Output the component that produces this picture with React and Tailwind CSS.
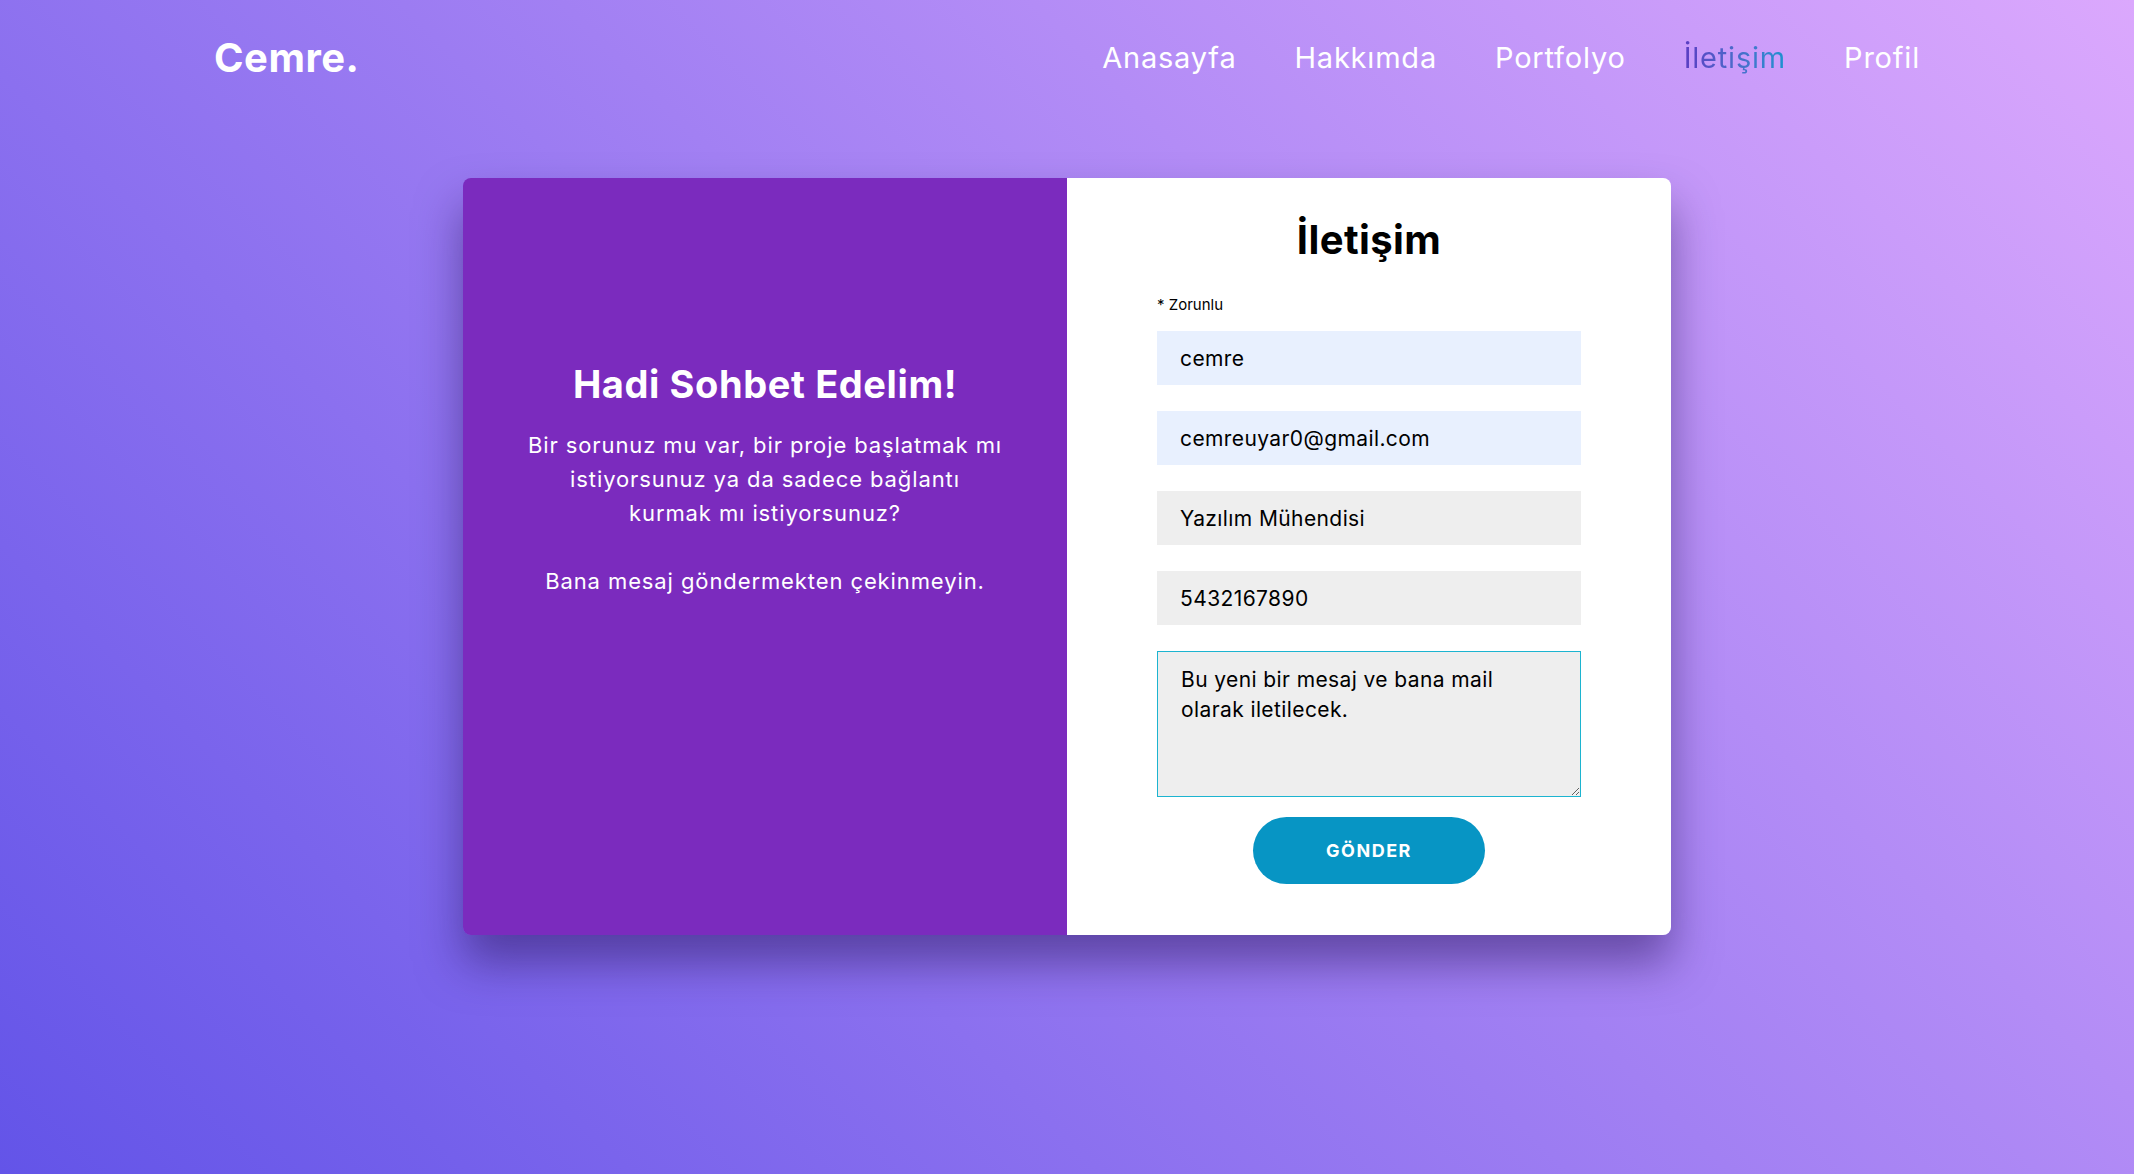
import { useEffect, useRef } from "react";

const NAV = ["Anasayfa", "Hakkımda", "Portfolyo", "İletişim", "Profil"];

const Field = ({ value, autofill }) => (
  <input
    type="text"
    defaultValue={value}
    className={`w-full h-[54px] px-[23px] text-[21px] tracking-[0.4px] text-black outline-none ${
      autofill ? "bg-[#e8f0fe]" : "bg-[#eeeeee]"
    }`}
  />
);

const App = () => {
  const msgRef = useRef(null);

  useEffect(() => {
    const el = msgRef.current;
    if (el) {
      el.focus();
      el.setSelectionRange(el.value.length, el.value.length);
    }
  }, []);

  return (
    <div className="min-h-screen bg-[linear-gradient(45deg,#6354e8,#dba8fd)] font-['Inter',sans-serif]">
      {/* Header */}
      <header className="h-[116px] px-[214px] flex items-center justify-between">
        <div className="text-[40px] font-bold text-white tracking-[0.5px]">
          Cemre.
        </div>
        <nav className="flex items-center gap-[58px]">
          {NAV.map((item) =>
            item === "İletişim" ? (
              <a
                key={item}
                className="text-[29px] tracking-[0.8px] bg-linear-to-r from-[#5a3cc3] to-[#1592d0] bg-clip-text text-transparent"
              >
                {item}
              </a>
            ) : (
              <a key={item} className="text-[29px] tracking-[0.8px] text-white">
                {item}
              </a>
            )
          )}
        </nav>
      </header>

      {/* Contact card */}
      <main className="flex justify-center pt-[62px]">
        <div className="w-[1208px] h-[757px] flex rounded-lg overflow-hidden shadow-[0_28px_45px_rgba(40,20,90,0.5)]">
          <div className="w-1/2 bg-[#7b2bbe] flex flex-col items-center pt-[183px] text-white text-center">
            <h2 className="text-[38px] leading-[46px] font-bold tracking-[0.6px] mb-[21px]">
              Hadi Sohbet Edelim!
            </h2>
            <p className="w-[477px] text-[22px] leading-[34px] tracking-[0.9px]">
              Bir sorunuz mu var, bir proje başlatmak mı istiyorsunuz ya da
              sadece bağlantı kurmak mı istiyorsunuz?
            </p>
            <p className="text-[22px] leading-[34px] tracking-[0.9px] mt-[34px]">
              Bana mesaj göndermekten çekinmeyin.
            </p>
          </div>

          <div className="w-1/2 bg-white px-[90px] pt-[38px]">
            <h2 className="text-[40px] leading-[48px] font-bold tracking-[0.4px] text-black text-center">
              İletişim
            </h2>
            <p className="mt-[31px] text-[15px] leading-[20px] text-black">
              * Zorunlu
            </p>
            <form className="mt-[16px] flex flex-col gap-[26px]">
              <Field value="cemre" autofill />
              <Field value="cemreuyar0@gmail.com" autofill />
              <Field value="Yazılım Mühendisi" />
              <Field value="5432167890" />
              <textarea
                ref={msgRef}
                defaultValue="Bu yeni bir mesaj ve bana mail olarak iletilecek. "
                className="w-full h-[146px] pl-[23px] pr-[60px] py-[13px] text-[21px] leading-[30px] tracking-[0.4px] text-black bg-[#eeeeee] border border-[#1cb4d0] outline-none caret-black"
              />
            </form>
            <div className="flex justify-center mt-[20px]">
              <button className="w-[232px] h-[67px] rounded-full bg-[#0795c4] text-white text-[18px] font-bold tracking-[1.5px]">
                GÖNDER
              </button>
            </div>
          </div>
        </div>
      </main>
    </div>
  );
};

export default App;
